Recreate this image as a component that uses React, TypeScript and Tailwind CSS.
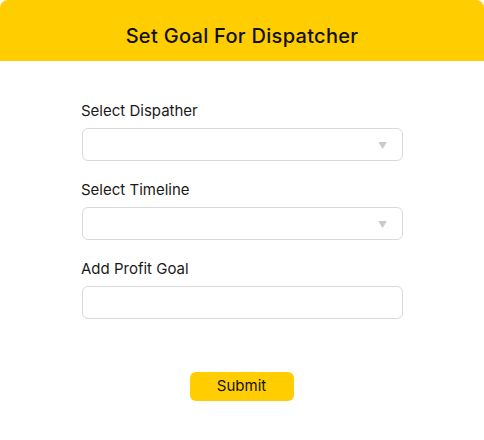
import React from 'react';

const Field = ({ label, select }: { label: string; select?: boolean }) => (
  <div className="flex flex-col">
    <label className="h-5 leading-5 text-[15px] text-[#1a1a1a] mb-[7px] -ml-px">{label}</label>
    <div className="relative h-[33px] w-full rounded-[6px] border border-[#d9d9d9] bg-white">
      {select && (
        <span className="absolute right-[15px] top-1/2 -translate-y-1/2 text-[9px] leading-none text-[#c9c9c9]">▼</span>
      )}
    </div>
  </div>
);

const App = () => {
  return (
    <div className="w-[484px] h-[440px] bg-white font-['Inter',sans-serif]">
      <div className="h-[61px] bg-[#FFCD00] rounded-t-lg flex items-center justify-center pt-[10px]">
        <h1 className="text-[20px] font-medium text-[#111] tracking-[0.3px]">Set Goal For Dispatcher</h1>
      </div>

      <div className="ml-[82px] w-[321px] pt-[40px] flex flex-col gap-[19px]">
        <Field label="Select Dispather" select />
        <Field label="Select Timeline" select />
        <Field label="Add Profit Goal" />
      </div>

      <div className="flex justify-center pt-[53px]">
        <button className="w-[104px] h-[29px] rounded-[6px] bg-[#FFCD00] text-[15px] text-[#111] -ml-px">
          Submit
        </button>
      </div>
    </div>
  );
};

export default App;
